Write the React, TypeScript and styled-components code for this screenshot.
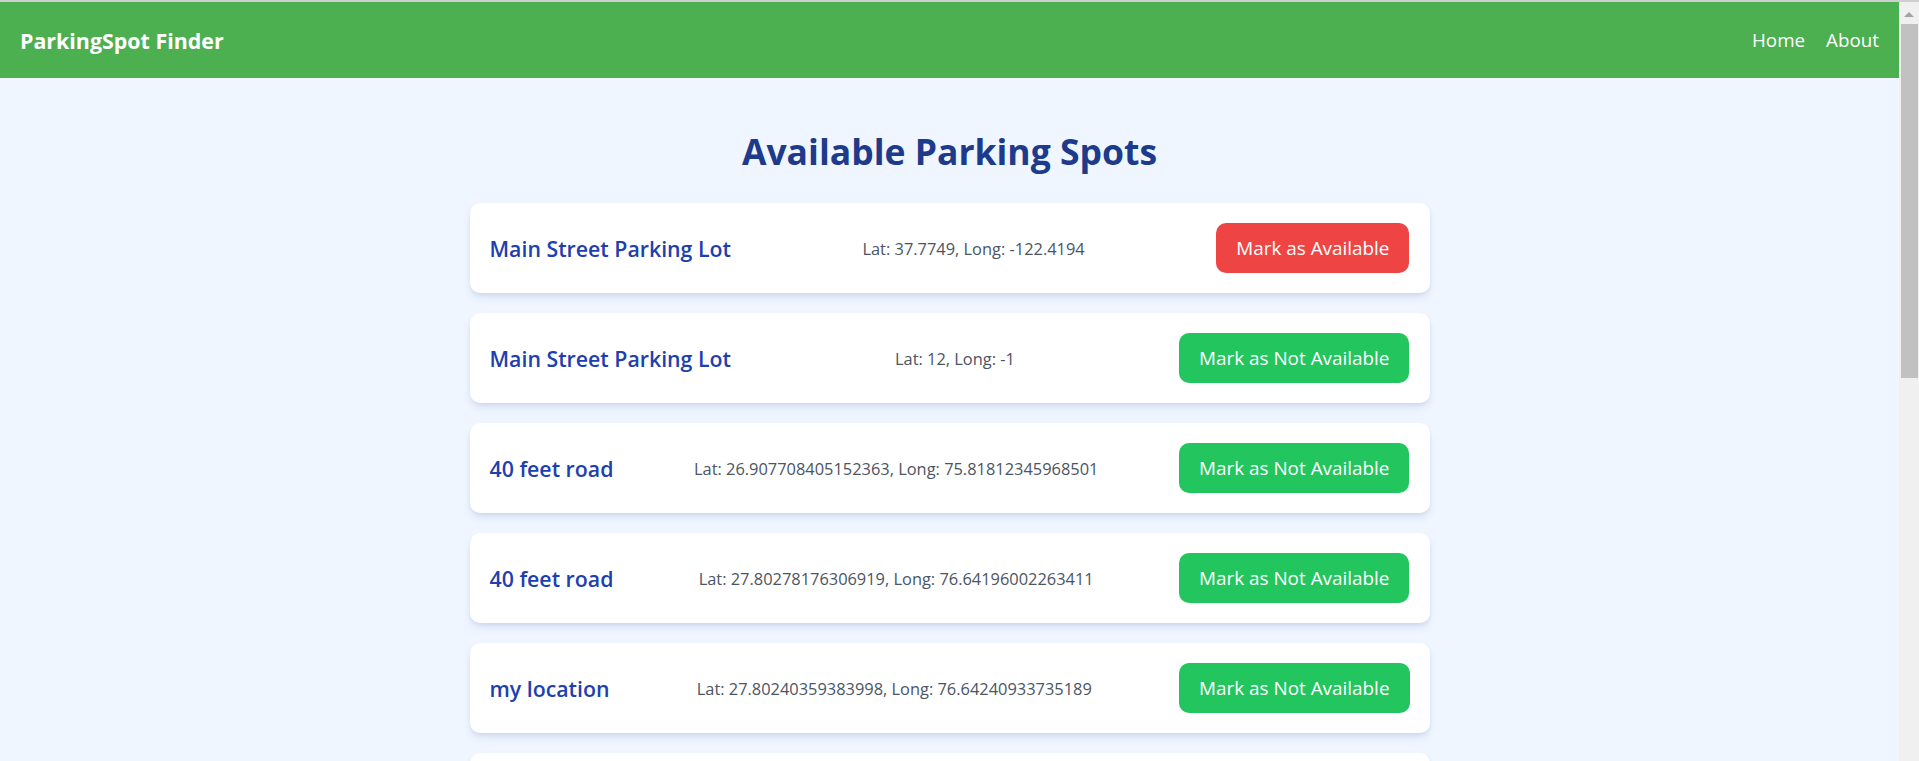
import React from "react";
import styled, { createGlobalStyle } from "styled-components";

const GlobalStyle = createGlobalStyle`
  html {
    border-top: 2px solid #cfcfcf;
    background: #eff6ff;
  }
  body {
    margin: 0 20px 0 0;
    background: #eff6ff;
    font-family: "Open Sans", "Noto Sans", Arial, sans-serif;
  }
`;

const ScrollTrack = styled.div`
  position: fixed;
  top: 2px;
  right: 0;
  bottom: 0;
  width: 20px;
  background: #f0f0f0;
  display: flex;
  flex-direction: column;
  align-items: center;
`;

const ScrollArrow = styled.div`
  margin-top: 10px;
  width: 0;
  height: 0;
  border-left: 5px solid transparent;
  border-right: 5px solid transparent;
  border-bottom: 5px solid #a3a3a3;
`;

const ScrollThumb = styled.div`
  margin-top: 7px;
  width: 17px;
  height: 354px;
  background: #c1c1c1;
`;

const Header = styled.header`
  height: 76px;
  background: #4caf50;
  padding: 0 20px;
  display: flex;
  align-items: center;
  justify-content: space-between;
  box-sizing: border-box;
`;

const Brand = styled.div`
  color: #ffffff;
  font-size: 21.4px;
  font-weight: 700;
`;

const Nav = styled.nav`
  display: flex;
  gap: 21px;
`;

const NavLink = styled.a`
  color: #ffffff;
  font-size: 18.8px;
  text-decoration: none;
  cursor: pointer;
`;

const Main = styled.main`
  padding: 49px 0 40px;
`;

const Title = styled.h1`
  margin: 0 0 28px;
  text-align: center;
  color: #1e3a8a;
  font-size: 35.5px;
  line-height: 48px;
  font-weight: 700;
`;

const List = styled.div`
  width: 960px;
  margin: 0 auto;
  display: flex;
  flex-direction: column;
  gap: 20px;
`;

const Card = styled.div`
  background: #ffffff;
  border-radius: 10px;
  box-shadow: 0 5px 8px -1px rgba(30, 58, 138, 0.12), 0 2px 5px -2px rgba(30, 58, 138, 0.1);
  padding: 20px;
  display: flex;
  align-items: center;
  justify-content: space-between;
`;

const Name = styled.div`
  color: #1e40af;
  font-size: 21.3px;
  font-weight: 600;
`;

const Coords = styled.div`
  color: #4b5563;
  font-size: 16.4px;
`;

const ToggleButton = styled.button<{ $available: boolean }>`
  background: ${(p) => (p.$available ? "#22c55e" : "#ef4444")};
  color: #ffffff;
  border: none;
  border-radius: 10px;
  padding: 0 20px;
  height: 50px;
  font-family: inherit;
  font-size: 18.9px;
  cursor: pointer;
`;

type Spot = { name: string; lat: string; long: string; available: boolean };

const spots: Spot[] = [
  { name: "Main Street Parking Lot", lat: "37.7749", long: "-122.4194", available: false },
  { name: "Main Street Parking Lot", lat: "12", long: "-1", available: true },
  { name: "40 feet road", lat: "26.907708405152363", long: "75.81812345968501", available: true },
  { name: "40 feet road", lat: "27.80278176306919", long: "76.64196002263411", available: true },
  { name: "my location", lat: "27.80240359383998", long: "76.64240933735189", available: true },
  { name: "my location", lat: "27.80240359383998", long: "76.64240933735189", available: true },
  { name: "City Center Garage", lat: "26.9124", long: "75.7873", available: true },
  { name: "Station Road Lot", lat: "27.5530", long: "76.6346", available: true },
  { name: "Mall Parking", lat: "26.8505", long: "75.8049", available: true },
  { name: "Market Square", lat: "27.8027", long: "76.6419", available: true },
  { name: "Hospital Parking", lat: "26.9020", long: "75.8100", available: true },
  { name: "Bus Stand Lot", lat: "27.8010", long: "76.6380", available: true },
];

export default function App() {
  return (
    <>
      <GlobalStyle />
      <Header>
        <Brand>ParkingSpot Finder</Brand>
        <Nav>
          <NavLink>Home</NavLink>
          <NavLink>About</NavLink>
        </Nav>
      </Header>
      <Main>
        <Title>Available Parking Spots</Title>
        <List>
          {spots.map((s, i) => (
            <Card key={i}>
              <Name>{s.name}</Name>
              <Coords>
                Lat: {s.lat}, Long: {s.long}
              </Coords>
              <ToggleButton $available={s.available}>
                {s.available ? "Mark as Not Available" : "Mark as Available"}
              </ToggleButton>
            </Card>
          ))}
        </List>
      </Main>
      <ScrollTrack aria-hidden="true">
        <ScrollArrow />
        <ScrollThumb />
      </ScrollTrack>
    </>
  );
}
